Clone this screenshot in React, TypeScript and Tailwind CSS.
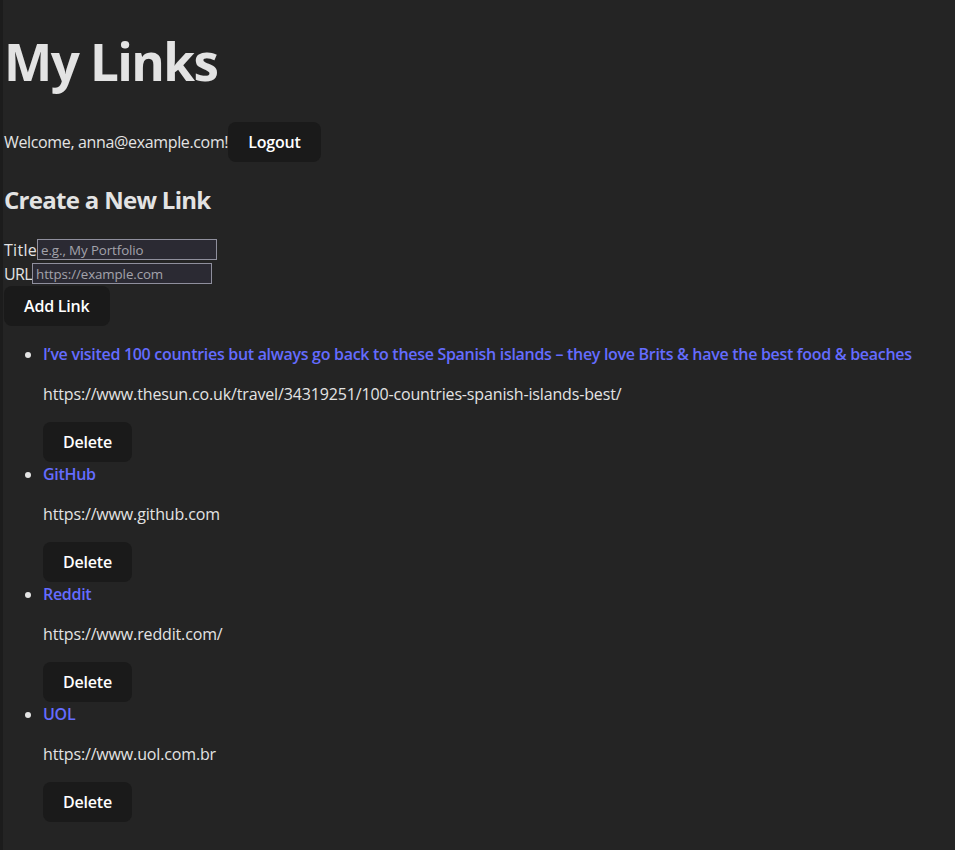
import React from "react";

const links = [
  {
    title: "I’ve visited 100 countries but always go back to these Spanish islands – they love Brits & have the best food & beaches",
    url: "https://www.thesun.co.uk/travel/34319251/100-countries-spanish-islands-best/",
  },
  { title: "GitHub", url: "https://www.github.com" },
  { title: "Reddit", url: "https://www.reddit.com/" },
  { title: "UOL", url: "https://www.uol.com.br" },
];

function Btn({ children }: { children: React.ReactNode }) {
  return (
    <button className="h-10 px-[19px] rounded-lg bg-[#1a1a1a] text-white font-semibold text-[16px] tracking-[-0.2px] border border-transparent">
      {children}
    </button>
  );
}

const inputCls =
  "mt-px h-[21px] w-[180px] bg-[#2b2a33] border border-[#8f8f9d] px-[3px] text-[13.33px] leading-4 tracking-[-0.1px] text-[#e3e3e3] placeholder:text-[#a3a3ab] outline-none";

export default function App() {
  return (
    <div
      className="min-h-screen bg-[#242424] text-[#e3e3e3] border-l-[3px] border-[#1c1c1c] text-[16px] leading-6 tracking-[-0.35px]"
      style={{ fontFamily: '"Open Sans", "Noto Sans", sans-serif' }}
    >
      <h1 className="pt-[33px] text-[51.2px] leading-[56px] font-bold tracking-[-1.6px] pl-px">My Links</h1>
      <div className="mt-[33px] flex items-center pl-px">
        <span>Welcome, anna@example.com!</span>
        <Btn>Logout</Btn>
      </div>
      <h2 className="mt-[20px] text-[24px] leading-9 font-bold tracking-[-0.7px] pl-px">Create a New Link</h2>
      <div className="mt-[20px] pl-px">
        <div className="flex items-start h-6">
          <label className="tracking-[0.3px]">Title</label>
          <input placeholder="e.g., My Portfolio" className={inputCls} />
        </div>
        <div className="flex items-start h-6">
          <label className="tracking-[-0.6px]">URL</label>
          <input placeholder="https://example.com" className={inputCls} />
        </div>
        <Btn>Add Link</Btn>
      </div>
      <ul className="mt-4 pl-10 list-disc">
        {links.map((l) => (
          <li key={l.title}>
            <a href="#" className="text-[#646cff] font-semibold tracking-[-0.3px]">
              {l.title}
            </a>
            <p className="mt-4 tracking-[-0.15px]">{l.url}</p>
            <div className="mt-4">
              <Btn>Delete</Btn>
            </div>
          </li>
        ))}
      </ul>
    </div>
  );
}
